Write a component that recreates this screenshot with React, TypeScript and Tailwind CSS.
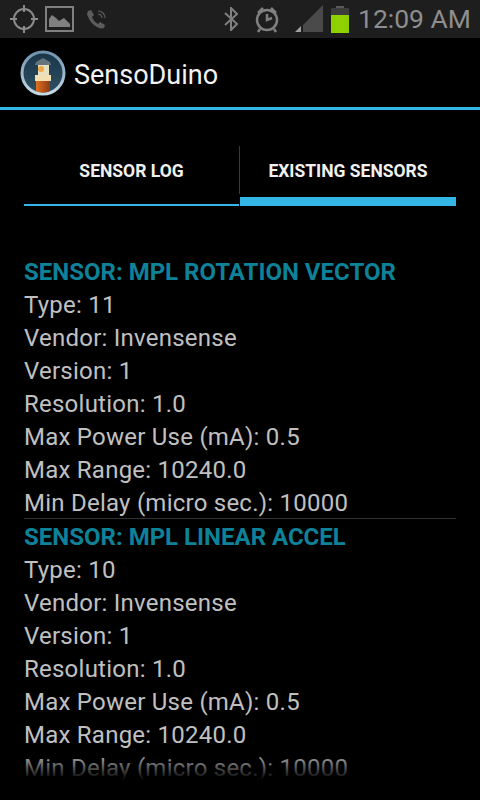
const font = { fontFamily: "Roboto, sans-serif" };

const sensors = [
  { name: "SENSOR: MPL ROTATION VECTOR", type: "11" },
  { name: "SENSOR: MPL LINEAR ACCEL", type: "10" },
];

const StatusBar = () => (
  <div className="flex h-[38px] items-center justify-between bg-[#1e1e1e] pl-[9px] pr-[9px]">
    <div className="flex items-center">
      <svg width="30" height="30" viewBox="0 0 30 30" fill="none" stroke="#8a8a8a" strokeWidth="2">
        <circle cx="15" cy="15" r="10" />
        <path d="M15 1v7M15 22v7M1 15h7M22 15h7" />
      </svg>
      <svg className="ml-[6px]" width="29" height="26" viewBox="0 0 29 26">
        <rect x="1" y="1" width="27" height="24" fill="none" stroke="#808080" strokeWidth="2" />
        <path d="M4 21V13l3-4 4 3 3 3 5-3 6 6v3z" fill="#808080" />
      </svg>
      <svg className="ml-[12px]" width="22" height="22" viewBox="0 0 22 22" fill="none">
        <path d="M2 3l3-1 3 5-2 2c1 3 3 5 6 7l2-2 5 3-1 3c-3 1-6 0-10-3S2 9 1 6z" fill="#5c5c5c" />
        <path d="M12 6c2 0 4 2 4 4M12 3c4 0 7 3 7 7" stroke="#5c5c5c" strokeWidth="1.2" />
      </svg>
    </div>
    <div className="flex items-center">
      <svg width="16" height="24" viewBox="0 0 16 24" fill="none" stroke="#808080" strokeWidth="2">
        <path d="M2 6l12 11-6 6V1l6 6L2 18" />
      </svg>
      <svg className="ml-[14px]" width="28" height="28" viewBox="0 0 28 28" fill="none" stroke="#808080" strokeWidth="2.5">
        <circle cx="14" cy="15" r="10" />
        <path d="M14 9v6l5-2M5 8l5-5M23 8l-5-5M7 24l-2 3M21 24l2 3" />
      </svg>
      <svg className="ml-[14px]" width="28" height="28" viewBox="0 0 28 28">
        <path d="M28 0v27H8V20z" fill="#4a4a4a" />
        <path d="M6 21v6H0z" fill="#a0a0a0" />
      </svg>
      <div className="ml-[8px] flex flex-col items-center">
        <div className="h-[2px] w-[8px] bg-[#5a5a5a]" />
        <div className="h-[7px] w-[18px] bg-[#3d3d3d]" />
        <div className="h-[18px] w-[18px] bg-[#8fd100]" />
      </div>
      <span className="ml-[9px] text-[26.5px] leading-none text-[#8e8e8e]">12:09 AM</span>
    </div>
  </div>
);

const ActionBar = () => (
  <div className="flex h-[72px] items-center border-b-[3px] border-[#33b5e5] bg-black pl-[20px]">
    <svg width="46" height="46" viewBox="0 0 46 46">
      <defs>
        <linearGradient id="ring" x1="0" y1="0" x2="0" y2="1">
          <stop offset="0" stopColor="#6f93ad" />
          <stop offset="1" stopColor="#c6dbe8" />
        </linearGradient>
        <linearGradient id="bg" x1="0" y1="0" x2="0" y2="1">
          <stop offset="0" stopColor="#1a3548" />
          <stop offset="1" stopColor="#2f5064" />
        </linearGradient>
        <linearGradient id="base" x1="0" y1="0" x2="1" y2="0">
          <stop offset="0" stopColor="#e0701f" />
          <stop offset="1" stopColor="#8f3a14" />
        </linearGradient>
      </defs>
      <circle cx="23" cy="23" r="21" fill="url(#bg)" stroke="url(#ring)" strokeWidth="3" />
      <path d="M15 15l1-3 7-4 7 4 1 3z" fill="#66747c" />
      <rect x="18" y="15" width="11" height="10" fill="#e6dfc0" />
      <circle cx="21" cy="19" r="3" fill="#f0a848" />
      <rect x="15" y="25" width="16" height="6" fill="#f3e0b2" />
      <path d="M16 31h14v10c-4 2-10 2-14 0z" fill="url(#base)" />
    </svg>
    <span className="ml-[8px] mt-[6px] text-[27px] leading-none text-[#f2f2f2]">SensoDuino</span>
  </div>
);

const Tabs = () => (
  <div className="mx-[24px] mt-[36px] flex h-[60px] font-bold text-[17.5px] text-[#f0f0f0]">
    <div className="flex w-[215px] items-start justify-center border-b-2 border-[#33b5e5] pt-[12px]">
      SENSOR LOG
    </div>
    <div className="flex flex-1 flex-col">
      <div className="mb-[3px] flex h-[48px] items-start justify-center border-l border-[#3a3a3a] pt-[12px]">
        EXISTING SENSORS
      </div>
      <div className="ml-px h-[9px] bg-[#33b5e5]" />
    </div>
  </div>
);

const Row = ({ children }: { children: React.ReactNode }) => (
  <div className="flex h-[33px] items-center pb-[2px] text-[24px] tracking-[0.24px] text-[#c0c0c0]">{children}</div>
);

const SensorBlock = ({ name, type }: { name: string; type: string }) => (
  <div className="border-b border-[#333333]">
    <div className="flex h-[35px] items-center pt-[1px] text-[24px] font-bold text-[#0d8299]">{name}</div>
    <Row>Type: {type}</Row>
    <Row>Vendor: Invensense</Row>
    <Row>Version: 1</Row>
    <Row>Resolution: 1.0</Row>
    <Row>Max Power Use (mA): 0.5</Row>
    <Row>Max Range: 10240.0</Row>
    <div className="flex h-[31px] items-center text-[24px] tracking-[0.24px] text-[#c0c0c0]">
      Min Delay (micro sec.): 10000
    </div>
  </div>
);

export default function App() {
  return (
    <div className="relative h-[800px] w-[480px] overflow-hidden bg-black" style={font}>
      <StatusBar />
      <ActionBar />
      <Tabs />
      <div className="mx-[24px] mt-[48px] h-[526px] overflow-hidden">
        {sensors.map((s) => (
          <SensorBlock key={s.name} name={s.name} type={s.type} />
        ))}
      </div>
      {/* fade at the bottom of the list */}
      <div className="absolute bottom-[20px] left-0 right-0 h-[28px] bg-gradient-to-b from-transparent to-black" />
    </div>
  );
}
